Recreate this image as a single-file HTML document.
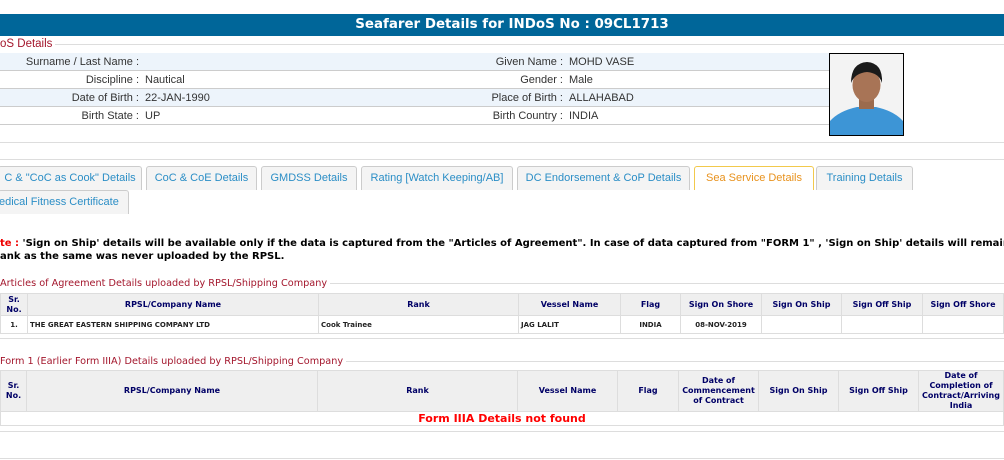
<!DOCTYPE html>
<html><head><meta charset="utf-8"><style>
*{margin:0;padding:0;box-sizing:border-box}
body{width:1004px;height:460px;overflow:hidden;background:#fff;position:relative;font-family:"Liberation Sans",Arial,sans-serif;font-size:11px;color:#333}
.a{position:absolute}
.hdr{left:0;top:14px;width:1004px;height:22px;background:#006699;color:#fff;font:bold 13.4px "DejaVu Sans",Verdana,sans-serif;text-align:center;line-height:22px;padding-left:20px}
.hl{height:1px;background:#ddd;left:0;width:1004px}
.leg{color:#a3162c;font-size:11.5px;background:#fff;padding-right:3px}
.row{left:0;width:829px;height:18px;border-bottom:1px solid #ccc}
.row.b{background:#edf4fb}
.lab{position:absolute;text-align:right;line-height:18px;color:#333}
.val{position:absolute;line-height:18px;color:#333}
.tab{position:absolute;height:24px;background:#f4f4f4;border:1px solid #ccc;border-bottom:none;border-radius:3px 3px 0 0;color:#2b8ec6;text-align:center;line-height:23px;font-size:11px;white-space:nowrap;overflow:hidden}
.tab.act{background:#fff;border-color:#f2c94c;color:#e8921d}
.note{left:0;width:1004px;overflow:hidden;font:bold 10px "DejaVu Sans",Verdana,sans-serif;color:#000;white-space:nowrap;line-height:13px}
.note span{color:#e00}
table{position:absolute;border-collapse:collapse;font-family:"DejaVu Sans",Verdana,sans-serif;font-weight:bold;font-size:8px;color:#000066}
td,th{border:1px solid #ddd;text-align:center;padding:0 2px}
th{background:#efefef;line-height:10px}
td{color:#222;font-size:7px}
.slbl{font-family:"DejaVu Sans",Verdana,sans-serif;font-size:9.7px;color:#a3162c;background:#fff;padding-right:3px}
</style></head><body>
<div class="a hdr">Seafarer Details for INDoS No : 09CL1713</div>
<div class="a hl" style="top:44px"></div>
<div class="a leg" style="left:0;top:37px;line-height:14px">oS Details</div>

<div class="a row b" style="top:53px"></div>
<div class="a row" style="top:71px"></div>
<div class="a row b" style="top:89px"></div>
<div class="a row" style="top:107px"></div>
<div class="a" style="left:0;top:53px;width:829px;height:72px">
<div class="lab" style="right:690px;top:0">Surname / Last Name :</div>
<div class="lab" style="right:690px;top:18px">Discipline :</div>
<div class="val" style="left:145px;top:18px">Nautical</div>
<div class="lab" style="right:690px;top:36px">Date of Birth :</div>
<div class="val" style="left:145px;top:36px">22-JAN-1990</div>
<div class="lab" style="right:690px;top:54px">Birth State :</div>
<div class="val" style="left:145px;top:54px">UP</div>
<div class="lab" style="right:266px;top:0">Given Name :</div>
<div class="val" style="left:569px;top:0">MOHD VASE</div>
<div class="lab" style="right:266px;top:18px">Gender :</div>
<div class="val" style="left:569px;top:18px">Male</div>
<div class="lab" style="right:266px;top:36px">Place of Birth :</div>
<div class="val" style="left:569px;top:36px">ALLAHABAD</div>
<div class="lab" style="right:266px;top:54px">Birth Country :</div>
<div class="val" style="left:569px;top:54px">INDIA</div>
</div>
<svg class="a" style="left:829px;top:53px" width="75" height="83" viewBox="0 0 75 83">
<rect x="0.5" y="0.5" width="74" height="82" fill="#f3f3f3" stroke="#000"/>
<path d="M1 82 L1 68 Q10 58 28 54 L47 54 Q65 58 74 68 L74 82Z" fill="#3d95d6"/>
<rect x="30" y="44" width="15" height="12" fill="#9b6b4e"/>
<ellipse cx="37.5" cy="32" rx="14" ry="17" fill="#a87456"/>
<path d="M22 30 Q22 10 38 9 Q54 10 53 30 Q50 20 38 19 Q26 20 22 30Z" fill="#1a1a1a"/>
</svg>
<div class="a hl" style="top:142px"></div>
<div class="a hl" style="top:159px"></div>

<div class="tab" style="left:-2px;top:166px;width:144px">C &amp; "CoC as Cook" Details</div>
<div class="tab" style="left:146px;top:166px;width:111px">CoC &amp; CoE Details</div>
<div class="tab" style="left:261px;top:166px;width:96px">GMDSS Details</div>
<div class="tab" style="left:361px;top:166px;width:152px">Rating [Watch Keeping/AB]</div>
<div class="tab" style="left:517px;top:166px;width:173px">DC Endorsement &amp; CoP Details</div>
<div class="tab act" style="left:694px;top:166px;width:120px">Sea Service Details</div>
<div class="tab" style="left:816px;top:166px;width:97px">Training Details</div>
<div class="tab" style="left:-2px;top:190px;width:131px;text-align:left;padding-left:0">edical Fitness Certificate</div>

<div class="a note" style="top:237px"><span>te :</span> 'Sign on Ship' details will be available only if the data is captured from the "Articles of Agreement". In case of data captured from "FORM 1" , 'Sign on Ship' details will remain</div>
<div class="a note" style="top:250px">ank as the same was never uploaded by the RPSL.</div>

<div class="a hl" style="top:283px"></div>
<div class="a slbl" style="left:0;top:277px;line-height:13px">Articles of Agreement Details uploaded by RPSL/Shipping Company</div>
<table style="left:0;top:293px;width:1004px">
<tr style="height:22px"><th style="width:27px">Sr.<br>No.</th><th style="width:291px">RPSL/Company Name</th><th style="width:200px">Rank</th><th style="width:102px">Vessel Name</th><th style="width:60px">Flag</th><th style="width:81px">Sign On Shore</th><th style="width:80px">Sign On Ship</th><th style="width:81px">Sign Off Ship</th><th>Sign Off Shore</th></tr>
<tr style="height:18px"><td>1.</td><td style="text-align:left">THE GREAT EASTERN SHIPPING COMPANY LTD</td><td style="text-align:left">Cook Trainee</td><td style="text-align:left">JAG LALIT</td><td>INDIA</td><td>08-NOV-2019</td><td></td><td></td><td></td></tr>
</table>
<div class="a hl" style="top:338px"></div>

<div class="a hl" style="top:361px"></div>
<div class="a slbl" style="left:0;top:355px;line-height:13px">Form 1 (Earlier Form IIIA) Details uploaded by RPSL/Shipping Company</div>
<table style="left:0;top:370px;width:1004px">
<tr style="height:41px"><th style="width:26px">Sr.<br>No.</th><th style="width:291px">RPSL/Company Name</th><th style="width:200px">Rank</th><th style="width:100px">Vessel Name</th><th style="width:61px">Flag</th><th style="width:80px">Date of<br>Commencement<br>of Contract</th><th style="width:80px">Sign On Ship</th><th style="width:80px">Sign Off Ship</th><th>Date of<br>Completion of<br>Contract/Arriving<br>India</th></tr>
<tr style="height:14px"><td colspan="9" style="color:#f00;font-size:11px;line-height:12px">Form IIIA Details not found</td></tr>
</table>
<div class="a hl" style="top:431px"></div>
<div class="a hl" style="top:458px"></div>
</body></html>
